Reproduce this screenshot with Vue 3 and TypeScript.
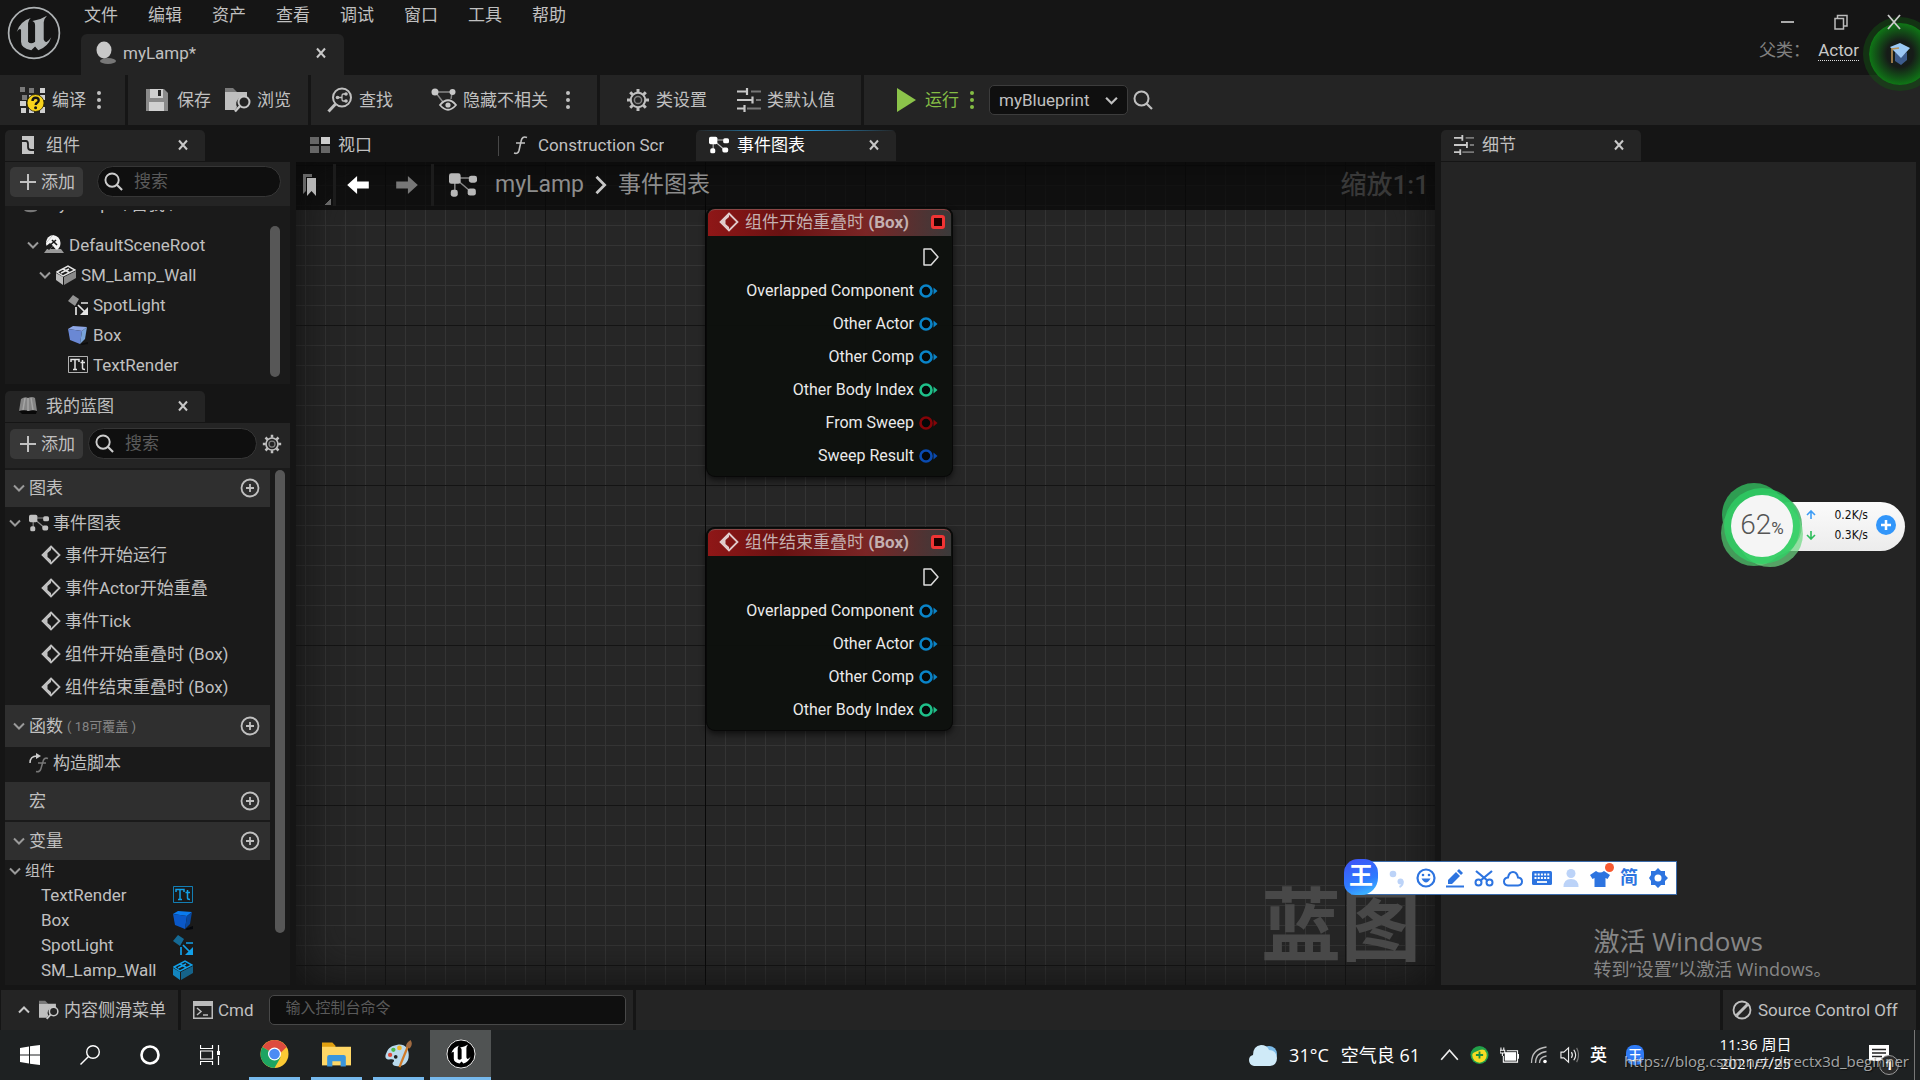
<script setup lang="ts">
import { ref } from 'vue'

interface Pin { label: string; color: string }
interface GraphNode { title: string; left: number; top: number; pins: Pin[] }
interface TreeRow { name: string; icon: string; depth: number; open: boolean }

const menus = ['文件', '编辑', '资产', '查看', '调试', '窗口', '工具', '帮助']

const tree: TreeRow[] = [
  { name: 'DefaultSceneRoot', icon: 'scene', depth: 0, open: true },
  { name: 'SM_Lamp_Wall', icon: 'mesh', depth: 1, open: true },
  { name: 'SpotLight', icon: 'spot', depth: 2, open: false },
  { name: 'Box', icon: 'box', depth: 2, open: false },
  { name: 'TextRender', icon: 'text', depth: 2, open: false },
]

const events = ['事件开始运行', '事件Actor开始重叠', '事件Tick', '组件开始重叠时 (Box)', '组件结束重叠时 (Box)']

const variables = [
  { name: 'TextRender', icon: 'text' },
  { name: 'Box', icon: 'boxblue' },
  { name: 'SpotLight', icon: 'spot' },
  { name: 'SM_Lamp_Wall', icon: 'mesh' },
]

const basePins: Pin[] = [
  { label: 'Overlapped Component', color: '#0a84c8' },
  { label: 'Other Actor', color: '#0a84c8' },
  { label: 'Other Comp', color: '#0a84c8' },
  { label: 'Other Body Index', color: '#1fc08a' },
]

const nodes: GraphNode[] = [
  {
    title: '组件开始重叠时',
    left: 410,
    top: 45,
    pins: [...basePins, { label: 'From Sweep', color: '#850408' }, { label: 'Sweep Result', color: '#0a4bb0' }],
  },
  { title: '组件结束重叠时', left: 410, top: 365, pins: basePins },
]

const imeTools = ['punct', 'smile', 'pen', 'scissors', 'cloud', 'keyboard', 'user', 'shirt', 'jian', 'cog']
const debugTarget = ref('myBlueprint')
const consoleInput = ref('')
const componentFilter = ref('')
const blueprintFilter = ref('')
</script>

<template>
  <div class="editor">
    <svg class="sprite" aria-hidden="true">
      <symbol id="i-close" viewBox="0 0 12 12"><path d="M2 1.5 10 10.5M10 1.5 2 10.5" stroke="currentColor" stroke-width="2" fill="none" /></symbol>
      <symbol id="i-down" viewBox="0 0 12 12"><path d="M1 3.5 6 8.5 11 3.5" stroke="currentColor" stroke-width="2" fill="none" /></symbol>
      <symbol id="i-dots" viewBox="0 0 6 20"><g fill="currentColor"><circle cx="3" cy="3" r="2" /><circle cx="3" cy="10" r="2" /><circle cx="3" cy="17" r="2" /></g></symbol>
      <symbol id="i-search" viewBox="0 0 20 20"><circle cx="8.500" cy="8.500" r="7" fill="none" stroke="currentColor" stroke-width="2" /><path d="m13.500 13.500 5.500 5.500" stroke="currentColor" stroke-width="2.200" /></symbol>
      <symbol id="i-plus" viewBox="0 0 16 16"><path d="M8 0v16M0 8h16" stroke="currentColor" stroke-width="2" /></symbol>
      <symbol id="i-addring" viewBox="0 0 20 20"><circle cx="10" cy="10" r="8.500" fill="none" stroke="currentColor" stroke-width="1.800" /><path d="M10 6v8M6 10h8" stroke="currentColor" stroke-width="1.800" /></symbol>
      <symbol id="i-gear" viewBox="0 0 24 24">
        <g fill="none" stroke="currentColor"><circle cx="12" cy="12" r="7.200" stroke-width="2" /><circle cx="12" cy="12" r="3.600" stroke-width="1.500" opacity=".6" />
          <path stroke-width="3" d="M12 4.500V1M12 19.500V23M4.500 12H1M19.500 12H23M6.700 6.700 4.200 4.200M17.300 17.300l2.500 2.500M17.300 6.700l2.500-2.500M6.700 17.300l-2.500 2.500" /></g>
      </symbol>
      <symbol id="i-compile" viewBox="0 0 26 26">
        <g fill="#7a7a7a"><path d="M0 0h5v5H0zM9 1h5v5H9zM2 8h5v5H2z" /></g>
        <g fill="#d0d0d0"><path d="M20 1h5v5h-5zM0 14h6v5H0zM1 21h5v5H1zM9 8h5v5H9zM20 8h5v5h-5zM20 20h5v6h-5zM9 22h5v4H9z" /></g>
        <circle cx="15.500" cy="16" r="8.500" fill="#f8d31c" stroke="#2a2400" stroke-width=".8" />
        <path d="M12.500 14q0-3.300 3.200-3.300 3 0 3 2.600 0 1.700-1.700 2.600-1.300.7-1.300 2" fill="none" stroke="#151515" stroke-width="2.400" /><circle cx="15.600" cy="20.800" r="1.500" fill="#151515" />
      </symbol>
      <symbol id="i-save" viewBox="0 0 24 24"><path d="M1 1h18l4 4v18H1z" fill="#8a8a8a" /><path d="M5 1h13v9H5z" fill="#d0d0d0" /><path d="M13 2h3v6h-3z" fill="#242424" /><path d="M4 14h15v9H4z" fill="#d0d0d0" /></symbol>
      <symbol id="i-browse" viewBox="0 0 26 26"><path d="M0 5V1h8l4 4z" fill="#7a7a7a" /><path d="M0 5h22v6a7 7 0 0 0-10 9l-2 3H0z" fill="#bfbfbf" /><circle cx="19" cy="15" r="5.500" fill="none" stroke="#c8c8c8" stroke-width="2" /><path d="m15 19-5 5.500" stroke="#c8c8c8" stroke-width="2.400" /></symbol>
      <symbol id="i-find" viewBox="0 0 26 26"><circle cx="15" cy="10.500" r="9" fill="none" stroke="currentColor" stroke-width="2" /><path d="m8.500 17-7 7.500" stroke="currentColor" stroke-width="3" /><path d="M19 7h-3q-1 0-1 2v3q0 2 1 2h3M10 10.500h5" stroke="currentColor" stroke-width="1.300" fill="none" /><g fill="currentColor"><circle cx="10.500" cy="10.500" r="1.800" /><circle cx="19" cy="7" r="1.800" /><circle cx="19" cy="14" r="1.800" /></g></symbol>
      <symbol id="i-hide" viewBox="0 0 26 24"><path d="M4 4h18M5 5l7 9M21 5l-1 6" stroke="#888" stroke-width="1.500" fill="none" /><g fill="#c8c8c8"><circle cx="4" cy="4" r="3.500" /><circle cx="21.500" cy="4" r="3" /></g><path d="M9 17q8-9.500 16 0-8 9.500-16 0z" fill="#242424" stroke="#c8c8c8" stroke-width="1.800" /><circle cx="17" cy="17" r="2.600" fill="#c8c8c8" /></symbol>
      <symbol id="i-sliders" viewBox="0 0 24 24"><path d="M14 3.500h10M19 12h5M10 20.500h14" stroke="#777" stroke-width="2.200" /><path d="M0 3.500h10M0 12h16M0 20.500h8" stroke="#c8c8c8" stroke-width="2.200" /><path d="M10 0v7M15.500 8.500v7M7.500 17v7" stroke="#c8c8c8" stroke-width="2.200" /></symbol>
      <symbol id="i-graph" viewBox="0 0 24 20"><path d="M5 4h15M5 4v12M5 4l14 12" stroke="currentColor" stroke-width="1.300" opacity=".7" /><g fill="currentColor"><rect width="10" height="9" rx="2" /><rect x="17" y="2" width="7" height="6" rx="2" /><rect x="1.500" y="14" width="6" height="6" rx="2" /><rect x="16" y="13" width="7" height="6" rx="2" /></g></symbol>
      <symbol id="i-comp" viewBox="0 0 14 20"><path d="M1 1h12v18H1z" fill="#c4c4c4" /><path d="M1 6h4q2 0 2 3v3q0 3 3 3h3" fill="none" stroke="#222" stroke-width="1.800" /></symbol>
      <symbol id="i-book" viewBox="0 0 20 20"><path d="m1 15 3 3 14 0 1-3z" fill="#080808" /><path d="M3 3q4-3 7-1 4-2 7 0l2 13q-4-2-8 0-5-2-10 0z" fill="#858585" /><path d="M7 2 5 14M10 2v13M13 2l2 12" stroke="#a5a5a5" stroke-width="1.500" /></symbol>
      <symbol id="i-view" viewBox="0 0 20 18"><path d="M0 1h9v7H0zM0 10h9v7H0zM11 10h9v7h-9z" fill="#666" /><path d="M11 1h9v7h-9z" fill="#ccc" /></symbol>
      <symbol id="i-func" viewBox="0 0 14 20"><path d="M14 2.500q-5-2-6 4l-2 9q-1 4-5 2.500M3 8h9" fill="none" stroke="currentColor" stroke-width="1.600" /></symbol>
      <symbol id="i-construct" viewBox="0 0 20 20"><path d="M1 10Q1 3 8 3" fill="none" stroke="#ccc" stroke-width="1.500" /><path d="m7 0 5 3-5 3z" fill="#ccc" /><path d="M19 5.500q-4-1.500-5 3l-2 7q-1 4-5 3M9 10h8" fill="none" stroke="#777" stroke-width="1.500" /></symbol>
      <symbol id="i-sphere" viewBox="0 0 20 24"><ellipse cx="12" cy="20" rx="8" ry="3" fill="#777" /><ellipse cx="8" cy="9" rx="7.500" ry="8.500" fill="#c8c8c8" /></symbol>
      <symbol id="i-scene" viewBox="0 0 20 20"><path d="M3 14h14l3 4H0z" fill="#999" /><path d="M2 7Q3 1 9 0L2 8z" fill="#f4f4f4" /><path d="M2 8 9 0q7 1 7.500 8 0 4-3 6.500H12L9 11l-3 3Q2 12 2 8z" fill="#f4f4f4" /><path d="m1 12 5-4 3 3-4 4z" fill="#1a1a1a" /><path d="m4 12 8-7M8 5l5 5" stroke="#1a1a1a" stroke-width="1.600" /></symbol>
      <symbol id="i-mesh" viewBox="0 0 20 20"><path d="m0 8 7 4v8l-7-5z" fill="currentColor" opacity=".8" /><path d="m8 12 12-6v7L8 20z" fill="currentColor" opacity=".55" /><path d="M1 7 12 1l7 4-12 6zM7 4l7 4M13 4 5 8" fill="#1a1a1a" stroke="currentColor" stroke-width="1.500" /></symbol>
      <symbol id="i-spot" viewBox="0 0 20 20"><path d="m5 0 6 4-4 7-7-5z" fill="currentColor" opacity=".6" /><path d="M8 12v8M13 8h7M10 10l7 7" stroke="currentColor" stroke-width="1.700" /><path d="M20 12v8h-8z" fill="currentColor" /></symbol>
      <symbol id="i-box" viewBox="0 0 20 20"><path d="m12 19 8-2v2l-6 1z" fill="#0c0c0c" /><path d="m0 4 5-3 14 1-5 4z" fill="#8fa8e8" /><path d="m0 4 14 2-2 13L2 15z" fill="#6a88d4" /><path d="m14 6 5-4-2 12-5 5z" fill="#79a4da" /></symbol>
      <symbol id="i-boxblue" viewBox="0 0 20 20"><path d="m12 19 8-3v3l-6 1z" fill="#05070c" /><path d="m0 4 5-3 14 1-5 4z" fill="#0a7cf0" /><path d="m0 4 14 2-2 13L2 15z" fill="#0a58c8" /><path d="m14 6 5-4-2 12-5 5z" fill="#0848a0" /></symbol>
      <symbol id="i-text" viewBox="0 0 20 18"><path d="M.5.500h19v16H.5z" fill="none" stroke="currentColor" opacity=".75" /><path d="M3 6V3.500h8V6M7 3.500v10M5 13.500h4M14.500 4v8q0 1.500 2.500 1.500M12.500 6.500H17" fill="none" stroke="currentColor" stroke-width="1.500" /></symbol>
      <symbol id="i-event" viewBox="0 0 20 20"><path d="M10 1.500 18.500 10 10 18.500 1.500 10z" fill="none" stroke="currentColor" stroke-width="1.800" /><path d="M10 1v4L6.500 8v4l3.500 3v4L1 10z" fill="currentColor" /></symbol>
      <symbol id="i-bookmark" viewBox="0 0 20 26"><path d="M2 2h9v3H5v14l-3 3z" fill="#666" /><path d="M6 6h9v18l-4.500-5L6 24z" fill="#b5b5b5" /></symbol>
      <symbol id="i-arrow" viewBox="0 0 24 20"><path d="M0 10 11 0v6h13v8H11v6z" fill="currentColor" /></symbol>
      <symbol id="i-crumb" viewBox="0 0 14 22"><path d="m2 2 9 9-9 9" fill="none" stroke="#c8c8c8" stroke-width="3" /></symbol>
      <symbol id="i-cmd" viewBox="0 0 20 18"><path d="M0 0h20v18H0z" fill="#bbb" /><path d="M1.500 5h17v11.500h-17z" fill="#242424" /><path d="m4 7 4 3.500L4 14M10 14h5" stroke="#bbb" stroke-width="1.500" fill="none" /></symbol>
      <symbol id="i-off" viewBox="0 0 20 20"><circle cx="10" cy="10" r="8.500" fill="none" stroke="currentColor" stroke-width="1.800" /><path d="M4.500 15.500 15.500 4.500" stroke="currentColor" stroke-width="3" /></symbol>
      <symbol id="i-unreal" viewBox="0 0 50 50">
        <circle cx="25" cy="25" r="24" fill="currentColor" />
        <circle cx="25" cy="25" r="23.500" fill="none" stroke="var(--mark)" stroke-width="1.600" />
        <path d="M9 24Q12 14 22 11q-2.500 2-2.500 5v17q2.500 3 6.500 0V18q0-3-2.500-4 7-1 13.500-5-3 3-3 6v16q1 3 3 2 2-1 4-4-3 9-12 12l-3-3.500-3.500 3.500q-9.500-2-9.500-8V22q-1.500-2-4 2z" fill="var(--mark)" />
      </symbol>
      <symbol id="i-punct" viewBox="0 0 20 20"><g fill="#bcd3f8"><circle cx="6" cy="6" r="3.300" /><circle cx="13.500" cy="13.500" r="3" /></g><path d="M15.500 13q1 4-3 6" stroke="#bcd3f8" stroke-width="2" fill="none" /></symbol>
      <symbol id="i-smile" viewBox="0 0 20 20"><circle cx="10" cy="10" r="8.500" fill="none" stroke="currentColor" stroke-width="2.200" /><path d="M5.500 10.500q4.500 8 9 0z" fill="currentColor" /><circle cx="7" cy="7" r="1.300" fill="currentColor" /><circle cx="13" cy="7" r="1.300" fill="currentColor" /></symbol>
      <symbol id="i-pen" viewBox="0 0 20 20"><path d="M1 18.500h18" stroke="currentColor" stroke-width="2" /><path d="M3 16V12L11 4l4 4-8 8zM12 3l2-2 4 4-2 2z" fill="currentColor" /></symbol>
      <symbol id="i-scissors" viewBox="0 0 20 20"><path d="m2 3 12 10M18 3 6 13" stroke="currentColor" stroke-width="2.200" /><g fill="none" stroke="currentColor" stroke-width="2"><circle cx="4.500" cy="14.500" r="3" /><circle cx="15.500" cy="14.500" r="3" /></g></symbol>
      <symbol id="i-cloud" viewBox="0 0 20 20"><path d="M5 17.500q-4-.5-4-4 0-3.500 4-4 1-5.500 5-5.500t5 5.500q4 .5 4 4 0 3.500-4 4z" fill="none" stroke="currentColor" stroke-width="2" /></symbol>
      <symbol id="i-keyboard" viewBox="0 0 20 20"><rect y="3" width="20" height="14" rx="1.500" fill="currentColor" /><path d="M2.500 6.500h15M2.500 10h15" stroke="#fff" stroke-width="1.800" stroke-dasharray="2 1.200" /><path d="M5 14h10" stroke="#fff" stroke-width="1.800" /></symbol>
      <symbol id="i-user" viewBox="0 0 20 20"><g fill="#bcd3f8"><circle cx="10" cy="5.500" r="4.500" /><path d="M2.500 19q0-8 7.500-8t7.500 8z" /></g></symbol>
      <symbol id="i-shirt" viewBox="0 0 20 20"><path d="M6 3q4 3 8 0l6 4-2.500 4-2-1v9h-11v-9l-2 1L0 7z" fill="currentColor" /></symbol>
      <symbol id="i-cog" viewBox="0 0 20 20"><path d="m10 0 3 3h4v4l3 3-3 3v4h-4l-3 3-3-3H3v-4l-2-3 2-3V3h4z" fill="currentColor" /><circle cx="10" cy="10" r="3.500" fill="#fff" /></symbol>
      <symbol id="i-win" viewBox="0 0 20 20"><path d="M0 3l9-1.500v8H0zM10 1.300 20 0v9.500H10zM0 10.500h9v8L0 17zM10 10.500h10V20l-10-1.300z" fill="#fff" /></symbol>
      <symbol id="i-wsearch" viewBox="0 0 20 20"><circle cx="13" cy="7" r="6.300" fill="none" stroke="#fff" stroke-width="1.400" /><path d="M8.500 11.500.5 19.500" stroke="#fff" stroke-width="1.400" /></symbol>
      <symbol id="i-cortana" viewBox="0 0 20 20"><circle cx="10" cy="10" r="8.500" fill="none" stroke="#fff" stroke-width="2.600" /></symbol>
      <symbol id="i-taskview" viewBox="0 0 20 20"><path d="M.5 0v3.500h12V0M.5 20v-3.500h12V20M.5 6h12v8H.5zM18.500 0v6M18.500 11v9" fill="none" stroke="#fff" stroke-width="1.200" /><path d="M17 6h3v4h-3z" fill="#fff" /></symbol>
      <symbol id="i-chrome" viewBox="0 0 28 28"><circle cx="14" cy="14" r="14" fill="#fcc934" /><path d="M14 14 1.900 7A14 14 0 0 1 26.100 7z" fill="#dd4b3e" /><path d="M14 14 1.900 7A14 14 0 0 0 14 28l6-10.500z" fill="#1da462" /><path d="M14 7h12.100L20 13z" fill="#dd4b3e" /><circle cx="14" cy="14" r="6.500" fill="#fff" /><circle cx="14" cy="14" r="5.300" fill="#4b8bf4" /></symbol>
      <symbol id="i-folder" viewBox="0 0 28 24"><path d="M0 1h10l3 3v6H0z" fill="#e0a010" /><path d="M0 5h28v18H0z" fill="#ffd766" /><path d="M5 24V15q0-2 2-2h14q2 0 2 2v9h-5v-5h-8v5z" fill="#3a96dd" /></symbol>
      <symbol id="i-paint" viewBox="0 0 30 30"><path d="M14 5c8-1 12 4 12 11 0 8-5 12-12 12-5 0-7-3-4-5 1-2-1-3-5-2-4 0-5-3-3-7C4 8 8 6 14 5z" fill="#b9d9ec" /><circle cx="6" cy="16" r="2.300" fill="#e04a3a" /><circle cx="9.500" cy="10.500" r="2.300" fill="#4fb848" /><circle cx="16" cy="8.500" r="2.500" fill="#f0b428" /><circle cx="12" cy="18" r="2" fill="#222" /><path d="M25 7 16 29" stroke="#d07a28" stroke-width="2.400" /><path d="M23 7q0-4 5-7 3 5-1 9z" fill="#a06a40" /></symbol>
      <symbol id="i-weather" viewBox="0 0 28 24"><circle cx="20" cy="11" r="8" fill="#7dbbe8" /><path d="M5 23q-5-1-5-6 0-4 4-5Q4 3 12 2q6 0 8 5 7 0 8 8 0 7-7 8z" fill="#cfeaf8" /></symbol>
      <symbol id="i-up" viewBox="0 0 16 12"><path d="m1 10 7-8 7 8" fill="none" stroke="#eee" stroke-width="1.400" /></symbol>
      <symbol id="i-360" viewBox="0 0 20 20"><circle cx="10" cy="10" r="10" fill="#22a04a" /><circle cx="10" cy="10.500" r="8" fill="#f6dc24" /><path d="M0 10Q2 1 10 1q6 0 7 3-8-1-17 6z" fill="#22a04a" /><path d="M10 6v8M6 10h8" stroke="#1a9040" stroke-width="2" /></symbol>
      <symbol id="i-battery" viewBox="0 0 20 16"><path d="M5 5h12v9H5z" fill="#fff" /><path d="M3.500 9v6.500h15V3.500H7M19.500 7v5M1 0v3M4 0v3M0 3h5v3H0zM2.500 6v3" fill="none" stroke="#fff" stroke-width="1.100" /></symbol>
      <symbol id="i-wifi" viewBox="0 0 18 18"><path d="M1 17Q1 3 16 1M5 17Q5 7 16 5.500M9 17q0-6 7-7" fill="none" stroke="#bbb" stroke-width="1.300" /><circle cx="14.500" cy="15.500" r="1.800" fill="#fff" /></symbol>
      <symbol id="i-sound" viewBox="0 0 20 18"><path d="M1 6h3l5-4.500v15L4 12H1z" fill="none" stroke="#eee" stroke-width="1.200" /><path d="M12 6q2 3 0 6M14.500 3.500q4 5.500 0 11" fill="none" stroke="#eee" stroke-width="1.200" /><path d="M17.500 1.500q4 7.500 0 15" fill="none" stroke="#777" stroke-width="1.200" /></symbol>
      <symbol id="i-notice" viewBox="0 0 20 20"><path d="M0 0h20v16h-5l-4 4v-4H0z" fill="#fff" /><path d="M3 4.500h14M3 8h14M3 11.500h10" stroke="#222" stroke-width="1.300" /></symbol>
      <symbol id="i-hat" viewBox="0 0 20 22"><path d="m5 9 6 5 6-5v8l-6 5-6-4z" fill="#3d5c8c" /><path d="m0 4 10-4 10 5-9 10z" fill="#9cc8f4" /><path d="M9 5 2 6v14" fill="none" stroke="#b89058" stroke-width="1.600" /></symbol>
    </svg>

    <header class="titlebar">
      <svg class="logo"><use href="#i-unreal" /></svg>
      <div class="title-main">
        <nav class="menus"><button v-for="m in menus" :key="m" type="button">{{ m }}</button></nav>
        <div class="asset-tab">
          <svg class="s20 tall"><use href="#i-sphere" /></svg>
          <span>myLamp*</span>
          <button class="x" type="button" aria-label="关闭"><svg><use href="#i-close" /></svg></button>
        </div>
      </div>
      <div class="title-side">
        <div class="winbtns">
          <button type="button" aria-label="最小化"><svg viewBox="0 0 14 16"><path d="M0 8h13" stroke="#aaa" stroke-width="2" /></svg></button>
          <button type="button" aria-label="还原"><svg viewBox="0 0 14 16"><path d="M1 4.500h8.500V15H1zM3.500 4V1.500H13V12H10" fill="none" stroke="#bbb" stroke-width="1.500" /></svg></button>
          <button type="button" aria-label="关闭窗口"><svg viewBox="0 0 14 16"><path d="m1 1 12 14M13 1 1 15" stroke="#ccc" stroke-width="1.800" /></svg></button>
        </div>
        <p class="parent">父类： <a href="#actor">Actor</a></p>
      </div>
    </header>

    <div class="toolbar">
      <div class="group g-compile">
        <button type="button"><svg class="s26"><use href="#i-compile" /></svg>编译</button>
        <button type="button" class="dots" aria-label="编译选项"><svg><use href="#i-dots" /></svg></button>
      </div>
      <div class="group g-save">
        <button type="button"><svg class="s24"><use href="#i-save" /></svg>保存</button>
        <button type="button"><svg class="s26"><use href="#i-browse" /></svg>浏览</button>
      </div>
      <div class="group g-find">
        <button type="button"><svg class="s26"><use href="#i-find" /></svg>查找</button>
        <button type="button"><svg class="s26"><use href="#i-hide" /></svg>隐藏不相关</button>
        <button type="button" class="dots" aria-label="隐藏选项"><svg><use href="#i-dots" /></svg></button>
      </div>
      <div class="group g-class">
        <button type="button"><svg class="s24"><use href="#i-gear" /></svg>类设置</button>
        <button type="button"><svg class="s24"><use href="#i-sliders" /></svg>类默认值</button>
      </div>
      <div class="group g-run">
        <button type="button" class="run"><svg class="s24" viewBox="0 0 24 24"><path d="M3 0v24l19-12z" fill="#8bc34a" /></svg>运行</button>
        <button type="button" class="dots run" aria-label="运行选项"><svg><use href="#i-dots" /></svg></button>
        <label class="picker">
          <select v-model="debugTarget" aria-label="调试对象"><option>myBlueprint</option></select>
          <svg><use href="#i-down" /></svg>
        </label>
        <button type="button" class="lens" aria-label="查找对象"><svg class="s20"><use href="#i-search" /></svg></button>
      </div>
    </div>

    <main class="workspace">
      <aside class="left">
        <div class="tab"><svg class="s20"><use href="#i-comp" /></svg>组件<button class="x" type="button" aria-label="关闭"><svg><use href="#i-close" /></svg></button></div>
        <section class="panel components">
          <div class="panel-head">
            <button type="button" class="add"><svg><use href="#i-plus" /></svg>添加</button>
            <label class="search wide"><svg><use href="#i-search" /></svg><input v-model="componentFilter" type="text" placeholder="搜索" aria-label="搜索组件"></label>
          </div>
          <div class="tree">
            <ul>
              <li class="self"><svg class="s20"><use href="#i-sphere" /></svg>myLamp（ 自我 ）</li>
              <li v-for="row in tree" :key="row.name" :class="'depth' + row.depth">
                <svg v-if="row.open" class="chev"><use href="#i-down" /></svg>
                <svg class="s20 bright"><use :href="'#i-' + row.icon" /></svg>{{ row.name }}
              </li>
            </ul>
            <div class="thumb"></div>
          </div>
        </section>

        <div class="tab second"><svg class="s20"><use href="#i-book" /></svg>我的蓝图<button class="x" type="button" aria-label="关闭"><svg><use href="#i-close" /></svg></button></div>
        <section class="panel blueprint">
          <div class="panel-head tall-head">
            <button type="button" class="add"><svg><use href="#i-plus" /></svg>添加</button>
            <label class="search"><svg><use href="#i-search" /></svg><input v-model="blueprintFilter" type="text" placeholder="搜索" aria-label="搜索蓝图"></label>
            <button type="button" class="opts" aria-label="设置"><svg class="s20"><use href="#i-gear" /></svg></button>
          </div>
          <div class="outline">
            <div class="outline-list">
              <h3><svg class="chev"><use href="#i-down" /></svg>图表<button type="button" aria-label="添加图表"><svg class="s20"><use href="#i-addring" /></svg></button></h3>
              <p class="graph-row"><svg class="chev"><use href="#i-down" /></svg><svg class="s20"><use href="#i-graph" /></svg>事件图表</p>
              <ul class="events">
                <li v-for="e in events" :key="e"><svg class="s20"><use href="#i-event" /></svg>{{ e }}</li>
              </ul>
              <h3 class="roomy"><svg class="chev"><use href="#i-down" /></svg>函数<small>( 18可覆盖 )</small><button type="button" aria-label="添加函数"><svg class="s20"><use href="#i-addring" /></svg></button></h3>
              <p class="func-row"><svg class="s20"><use href="#i-construct" /></svg>构造脚本</p>
              <h3 class="plain">宏<button type="button" aria-label="添加宏"><svg class="s20"><use href="#i-addring" /></svg></button></h3>
              <h3 class="vars-head"><svg class="chev"><use href="#i-down" /></svg>变量<button type="button" aria-label="添加变量"><svg class="s20"><use href="#i-addring" /></svg></button></h3>
              <p class="category"><svg class="chev"><use href="#i-down" /></svg>组件</p>
              <ul class="vars">
                <li v-for="v in variables" :key="v.name"><span>{{ v.name }}</span><svg class="s20"><use :href="'#i-' + v.icon" /></svg></li>
              </ul>
            </div>
            <div class="thumb"></div>
          </div>
        </section>
      </aside>

      <section class="center">
        <div class="tabs">
          <button type="button" class="doc"><svg class="s20"><use href="#i-view" /></svg><span>视口</span></button>
          <button type="button" class="doc ruled"><svg class="s20"><use href="#i-func" /></svg><span>Construction Script</span></button>
          <div class="tab active"><svg class="s20"><use href="#i-graph" /></svg>事件图表<button class="x" type="button" aria-label="关闭"><svg><use href="#i-close" /></svg></button></div>
        </div>
        <div class="canvas">
          <div class="crumbs">
            <button type="button" class="mark" aria-label="书签"><svg><use href="#i-bookmark" /></svg></button>
            <div class="history">
              <button type="button" class="back" aria-label="后退"><svg><use href="#i-arrow" /></svg></button>
              <button type="button" class="fwd" aria-label="前进"><svg><use href="#i-arrow" /></svg></button>
            </div>
            <svg class="crumb-icon"><use href="#i-graph" /></svg>
            <span>myLamp</span>
            <svg class="crumb-sep"><use href="#i-crumb" /></svg>
            <span>事件图表</span>
            <span class="zoom">缩放1:1</span>
          </div>
          <article v-for="n in nodes" :key="n.title" class="node" :style="{ left: n.left + 'px', top: n.top + 'px' }">
            <header><svg class="s20"><use href="#i-event" /></svg><span>{{ n.title }} <b>(Box)</b></span><i></i></header>
            <div class="exec"><svg viewBox="0 0 16 18"><path d="M1 1h7l7 8-7 8H1z" fill="none" stroke="#ddd" stroke-width="1.500" stroke-linejoin="round" /></svg></div>
            <ul>
              <li v-for="p in n.pins" :key="p.label">{{ p.label }}
                <svg viewBox="0 0 20 14" :style="{ color: p.color }"><circle cx="7" cy="7" r="5.500" fill="#050808" stroke="currentColor" stroke-width="2.600" /><path d="m14.500 3.500 4 3.500-4 3.500z" fill="currentColor" /></svg>
              </li>
            </ul>
          </article>
          <div class="stamp">蓝图</div>
        </div>
      </section>

      <aside class="details">
        <div class="tab"><svg class="s20"><use href="#i-sliders" /></svg>细节<button class="x" type="button" aria-label="关闭"><svg><use href="#i-close" /></svg></button></div>
        <div class="panel empty"></div>
      </aside>
    </main>

    <footer class="status">
      <button type="button" class="cell drawer"><svg class="chev flip"><use href="#i-down" /></svg><svg class="s20"><use href="#i-browse" /></svg>内容侧滑菜单</button>
      <div class="cell console">
        <svg class="s20"><use href="#i-cmd" /></svg><label for="console">Cmd</label>
        <input id="console" v-model="consoleInput" type="text" placeholder="输入控制台命令">
      </div>
      <div class="cell fill"></div>
      <button type="button" class="cell source"><svg class="s20"><use href="#i-off" /></svg>Source Control Off</button>
    </footer>

    <div class="taskbar">
      <button type="button" class="sys" aria-label="开始"><svg class="s20"><use href="#i-win" /></svg></button>
      <button type="button" class="sys" aria-label="搜索"><svg class="s20"><use href="#i-wsearch" /></svg></button>
      <button type="button" class="sys" aria-label="Cortana"><svg class="s20"><use href="#i-cortana" /></svg></button>
      <button type="button" class="sys" aria-label="任务视图"><svg class="s20"><use href="#i-taskview" /></svg></button>
      <div class="apps">
        <button type="button" aria-label="Chrome"><svg><use href="#i-chrome" /></svg></button>
        <button type="button" aria-label="文件资源管理器"><svg><use href="#i-folder" /></svg></button>
        <button type="button" aria-label="画图"><svg><use href="#i-paint" /></svg></button>
        <button type="button" class="current" aria-label="Unreal"><svg><use href="#i-unreal" /></svg></button>
      </div>
      <div class="weather"><svg><use href="#i-weather" /></svg><span>31°C</span><span>空气良 61</span></div>
      <div class="tray">
        <svg><use href="#i-up" /></svg><svg><use href="#i-360" /></svg><svg><use href="#i-battery" /></svg><svg><use href="#i-wifi" /></svg><svg><use href="#i-sound" /></svg>
        <b>英</b><b class="wang">王</b>
      </div>
      <time class="clock"><span>11:36 周日</span><span>2021/7/25</span></time>
      <button type="button" class="notice" aria-label="通知"><svg class="s20"><use href="#i-notice" /></svg><i>1</i></button>
    </div>

    <div class="activate"><strong>激活 Windows</strong><span>转到“设置”以激活 Windows。</span></div>

    <div class="orb"><svg><use href="#i-hat" /></svg></div>

    <div class="meter">
      <div class="rates">
        <p><svg viewBox="0 0 10 10"><path d="M5 9V1M1 5l4-4 4 4" stroke="#3d9cf5" stroke-width="1.600" fill="none" /></svg>0.2K/s</p>
        <p><svg viewBox="0 0 10 10"><path d="M5 1v8M1 5l4 4 4-4" stroke="#2dbd5b" stroke-width="1.600" fill="none" /></svg>0.3K/s</p>
      </div>
      <button type="button" aria-label="加速"><svg viewBox="0 0 20 20"><circle cx="10" cy="10" r="10" fill="#3296fa" /><path d="M10 5v10M5 10h10" stroke="#fff" stroke-width="2.500" /></svg></button>
      <div class="dial">
        <svg viewBox="0 0 84 88">
          <circle cx="34" cy="34" r="32" fill="#2f9d52" />
          <circle cx="50" cy="44" r="32" fill="#3fae62" opacity=".85" />
          <circle cx="34" cy="52" r="33" fill="#48a861" opacity=".9" />
          <circle cx="50" cy="53" r="33" fill="#6cd882" opacity=".7" />
          <circle cx="42" cy="45" r="38" fill="#2fd266" opacity=".75" />
          <circle cx="42" cy="45" r="31" fill="#f5f5f5" />
        </svg>
        <p>62<small>%</small></p>
      </div>
    </div>

    <div class="ime">
      <div class="bubble"><b>王</b></div>
      <button v-for="t in imeTools" :key="t" type="button" :aria-label="t" :class="t">
        <template v-if="t === 'jian'">简</template>
        <svg v-else><use :href="'#i-' + t" /></svg>
      </button>
    </div>

    <a class="source-link" href="#source">https://blog.csdn.net/directx3d_beginner</a>
  </div>
</template>

<style>
body { background: #151515; }
</style>

<style scoped>
.editor { --mark: #aeb2b4; position: relative; display: flex; flex-direction: column; min-height: 100vh; overflow: hidden; background: #151515; color: #c0c0c0; font: 17px/24px Roboto, "Noto Sans CJK SC", sans-serif; }
.editor *, .editor *::before { box-sizing: border-box; }
.sprite { position: absolute; width: 0; height: 0; }
button { display: flex; align-items: center; padding: 0; border: 0; background: none; color: inherit; font: inherit; white-space: nowrap; }
svg { flex: none; }
ul, p, h3 { margin: 0; padding: 0; list-style: none; font: inherit; }
input, select { font: inherit; color: #c0c0c0; outline: 0; }
input::placeholder { color: #5a5a5a; opacity: 1; }
.s20 { width: 20px; height: 20px; }
.s24 { width: 24px; height: 24px; }
.s26 { width: 26px; height: 26px; }
.tall { height: 24px; }
.bright { color: #e4e4e4; }
.chev { width: 12px; height: 12px; color: #9a9a9a; }
.flip { color: #c8c8c8; transform: rotate(180deg); }
.x { margin-left: auto; color: #c8c8c8; }
.x svg { width: 12px; height: 12px; }

.titlebar { display: flex; height: 75px; }
.logo { width: 54px; height: 54px; margin: 6px 0 0 7px; color: #151515; }
.title-main { display: flex; flex-direction: column; justify-content: space-between; flex: 1; padding-left: 20px; }
.menus { display: flex; gap: 30px; padding: 3px 0 0 3px; }
.asset-tab { display: flex; align-items: center; gap: 7px; width: 263px; height: 41px; padding: 0 17px 3px 15px; border-radius: 6px 6px 0 0; background: #242424; }
.title-side { display: flex; flex-direction: column; gap: 8px; padding-top: 14px; }
.winbtns { position: relative; z-index: 2; display: flex; gap: 39px; padding: 0 19px 0 22px; }
.winbtns svg { width: 14px; height: 16px; }
.parent { padding-right: 57px; color: #808080; }
.parent a { margin-left: 4px; color: #c8c8c8; text-decoration: none; border-bottom: 1px dotted #ddd; }

.toolbar { display: flex; gap: 3px; height: 50px; }
.group { display: flex; align-items: center; background: #242424; }
.group button { gap: 6px; }
.dots svg { width: 6px; height: 20px; }
.g-compile { width: 125px; padding-left: 20px; gap: 10px; }
.g-save { width: 180px; padding-left: 17px; gap: 14px; }
.g-save button:first-child { gap: 8px; }
.g-find { width: 286px; padding-left: 16px; }
.g-find button:nth-child(2) { margin-left: 38px; }
.g-find .dots { margin-left: 17px; }
.g-class { width: 261px; padding-left: 26px; gap: 30px; }
.g-run { flex: 1; padding-left: 30px; gap: 10px; }
.run { color: #84bd44; }
.picker { position: relative; width: 139px; margin-left: 4px; }
.g-run .run { gap: 7px; }
.picker select { width: 100%; height: 30px; padding: 0 9px; border: 1px solid #3c3c3c; border-radius: 5px; background: #0f0f0f; appearance: none; }
.picker svg { position: absolute; right: 10px; top: 9px; width: 13px; height: 13px; }
.lens { margin-left: -5px; }

.workspace { display: flex; flex: 1; gap: 6px; padding: 5px 4px 5px 5px; }
.left { display: flex; flex-direction: column; flex: none; width: 285px; }
.tab { display: flex; align-items: center; gap: 8px; width: 200px; height: 31px; margin-bottom: 1px; padding: 0 16px 2px 13px; border-radius: 5px 5px 0 0; background: #242424; }
.tab.second { margin-top: 7px; }
.panel { background: #1a1a1a; }
.panel-head { display: flex; align-items: flex-start; height: 44px; padding: 4px 5px; background: #242424; }
.tall-head { height: 45px; padding: 5px; }
.add { gap: 5px; width: 73px; height: 30px; margin-top: 1px; padding-left: 10px; border-radius: 5px; background: #383838; }
.add svg { width: 16px; height: 16px; }
.search { position: relative; width: 169px; margin-left: 5px; }
.search.wide { width: 184px; margin-left: 14px; }
.search input { width: 100%; height: 31px; padding: 0 10px 2px 36px; border: 1px solid #363636; border-radius: 16px; background: #0f0f0f; }
.search svg { position: absolute; left: 7px; top: 6px; width: 19px; height: 19px; color: #ccc; }
.opts { margin: 6px 0 0 5px; }
.tree { display: flex; justify-content: space-between; height: 178px; padding: 4px 10px 5px 0; }
.tree ul { flex: 1; overflow: hidden; }
.tree li { display: flex; align-items: center; gap: 5px; height: 30px; }
.tree .self { align-items: flex-start; height: 41px; margin-top: -21px; padding-left: 14px; line-height: 30px; }
.tree .self svg { margin-top: 4px; }
.tree .depth0 { padding-left: 22px; }
.tree .depth1 { padding-left: 34px; }
.tree .depth2 { padding-left: 63px; }
.thumb { flex: none; width: 10px; border-radius: 5px; background: #575757; }
.tree .thumb { height: 151px; margin-top: 16px; }

.blueprint { flex: 1; }
.outline { display: flex; gap: 5px; padding-top: 2px; }
.outline-list { width: 265px; padding-bottom: 3px; }
.outline .thumb { height: 463px; }
h3 { display: flex; align-items: center; gap: 4px; height: 37px; padding: 0 10px 1px 8px; background: #2f2f2f; }
h3 button { margin-left: auto; }
h3 small { padding-top: 2px; color: #858585; font-size: 13px; }
h3.roomy { height: 42px; }
h3.plain { height: 38px; padding-left: 24px; }
h3.vars-head { height: 38px; margin-top: 2px; }
.graph-row { display: flex; align-items: center; height: 32px; padding-left: 4px; }
.graph-row .s20 { margin: 0 4px 0 8px; }
.events { padding-bottom: 1px; }
.events li { display: flex; align-items: center; gap: 4px; height: 33px; padding: 0 0 1px 36px; }
.func-row { display: flex; align-items: center; gap: 4px; height: 35px; padding: 0 0 3px 24px; }
.category { display: flex; align-items: center; gap: 4px; height: 22px; padding-left: 4px; font-size: 15px; }
.vars li { display: flex; align-items: center; height: 25px; padding-left: 36px; color: #c0c0c0; }
.vars span { width: 132px; }
.vars svg { color: #12a0e8; }

.center { display: flex; flex-direction: column; flex: 1; min-width: 0; }
.tabs { display: flex; }
.doc { gap: 8px; width: 200px; height: 31px; padding: 0 32px 2px 14px; }
.doc.ruled { padding-left: 16px; gap: 10px; background: linear-gradient(#484848, #484848) 2px 6px / 1px 20px no-repeat; }
.doc.ruled .s20 { width: 16px; }
.doc span { overflow: hidden; }
.tab.active { position: relative; color: #fff; }
.tab.active::before { content: ""; position: absolute; left: 0; top: 0; width: 100%; height: 1px; background: linear-gradient(90deg, transparent, #26a8f0, transparent); }
.canvas { position: relative; flex: 1; overflow: hidden; box-shadow: inset 0 0 50px #101010; background:
  linear-gradient(#080808, #080808) 409px 0 / 1px 100% no-repeat,
  linear-gradient(90deg, #141414 1px, transparent 1px) 89px 3px / 160px 160px,
  linear-gradient(#141414 1px, transparent 1px) 89px 3px / 160px 160px,
  linear-gradient(90deg, #343434 1px, transparent 1px) 9px 3px / 20px 20px,
  linear-gradient(#343434 1px, transparent 1px) 9px 3px / 20px 20px, #262626; }
.crumbs { display: flex; align-items: center; height: 48px; padding: 0 6px 2px 0; background: rgba(6, 6, 6, .68); color: #8c8c8c; font-size: 23px; }
.mark { height: 42px; width: 40px; padding-left: 5px; border-right: 3px solid #1c1c1c; background: linear-gradient(135deg, transparent 50%, #666 50%) 28px 34px / 7px 7px no-repeat; }
.mark svg { width: 20px; height: 26px; }
.history { display: flex; gap: 25px; height: 42px; width: 98px; padding-left: 10px; border-right: 3px solid #1c1c1c; }
.history svg { width: 24px; height: 18px; }
.back { color: #fff; }
.fwd { color: #777; }
.fwd svg { transform: scaleX(-1); }
.crumb-icon { width: 28px; height: 24px; margin: 0 18px 0 15px; color: #b8b8b8; }
.crumb-sep { width: 14px; height: 20px; margin: 0 10px; }
.zoom { margin-left: auto; color: #383838; font-size: 26px; font-weight: 500; }
.node { position: absolute; width: 247px; padding: 2px 2px 5px; border-radius: 9px; background: rgba(13, 16, 13, .95); box-shadow: inset 0 0 0 1px #080808, 0 3px 6px rgba(0, 0, 0, .6); }
.node header { display: flex; align-items: center; gap: 6px; height: 27px; padding: 0 6px 2px 11px; border-radius: 7px 7px 0 0; border-top: 1px solid #8a4545; background: linear-gradient(90deg, #8f1717, #691212 30%, #7a2525 65%, #3a3a3a); color: #c4b0b0; }
.node header svg { color: #e0cccc; }
.node header i { width: 14px; height: 14px; margin: 0 0 0 auto; border: 3px solid #f03434; border-radius: 3px; background: #200000; }
.node header b { font-weight: 700; }
.exec { display: flex; justify-content: flex-end; align-items: center; height: 38px; padding: 4px 12px 0 0; }
.exec svg { width: 16px; height: 18px; }
.node li { display: flex; justify-content: flex-end; align-items: center; gap: 5px; height: 33px; padding-right: 12px; color: #eaeaea; font-size: 16px; }
.node li svg { width: 20px; height: 14px; }
.stamp { position: absolute; right: 14px; bottom: 18px; color: #484848; font-size: 80px; font-weight: 700; line-height: 80px; }

.details { display: flex; flex-direction: column; flex: none; width: 475px; }
.empty { flex: 1; background: #242424; }

.status { display: flex; gap: 3px; height: 40px; padding: 0 4px 0 1px; }
.cell { display: flex; align-items: center; background: #242424; }
.drawer { width: 177px; padding-left: 17px; }
.drawer .s20 { margin: 0 5px 0 9px; }
.console { width: 452px; padding: 0 7px 0 12px; gap: 5px; }
.console input { flex: 1; min-width: 0; height: 30px; margin-left: 10px; padding: 0 16px 4px; border: 1px solid #484848; border-radius: 5px; background: #0f0f0f; font-size: 15px; }
.fill { flex: 1; }
.source { width: 193px; padding-left: 9px; gap: 6px; }

.taskbar { display: flex; align-items: center; height: 50px; padding: 0 5px 0 20px; background: #1e2122; color: #fff; font: 17px/20px "Open Sans", "Noto Sans CJK SC", sans-serif; }
.sys { width: 60px; }
.apps { display: flex; align-self: stretch; margin-left: -11px; }
.apps button { justify-content: center; width: 51px; margin-right: 11px; border-bottom: 3px solid #76b9ed; }
.apps svg { width: 29px; height: 28px; }
.apps .current { --mark: #fff; width: 61px; margin-left: -5px; background: #505353; color: #000; }
.apps .current svg { width: 30px; height: 30px; }
.weather { display: flex; align-items: center; gap: 12px; margin-left: auto; font-size: 18px; }
.weather svg { width: 28px; height: 24px; }
.tray { display: flex; align-items: center; gap: 11px; margin-left: 20px; }
.tray svg { width: 19px; height: 18px; }
.tray b { font-weight: 500; }
.wang { width: 18px; height: 20px; margin-left: 8px; border-radius: 8px; background: #2f7bf5; font-size: 14px; text-align: center; }
.clock { display: flex; flex-direction: column; align-items: center; width: 75px; margin-left: 74px; padding-bottom: 2px; font-size: 15px; line-height: 19px; white-space: nowrap; }
.notice { position: relative; width: 46px; margin-left: 76px; height: 50px; border-right: 1px solid #777; }
.notice i { position: absolute; left: 10px; top: 25px; width: 20px; height: 20px; border: 1px solid #999; border-radius: 50%; background: #2c2c2c; font: 700 14px/18px "Open Sans", sans-serif; text-align: center; }

.activate { position: absolute; left: 83%; bottom: 99px; display: flex; flex-direction: column; color: #868686; font: 18px/24px "Open Sans", "Noto Sans CJK SC", sans-serif; pointer-events: none; }
.activate strong { font-size: 26px; font-weight: 400; line-height: 32px; }
.orb { position: absolute; right: -17px; top: 17px; display: flex; align-items: center; justify-content: center; width: 74px; height: 74px; border: 6px solid rgba(18, 80, 18, .5); border-radius: 50%; background: radial-gradient(circle, #161c18 30%, #0f7a16 72%) padding-box; }
.orb svg { width: 20px; height: 22px; }
.meter { position: absolute; right: 15px; top: 502px; display: flex; align-items: center; width: 140px; height: 49px; padding: 0 9px 0 41px; border-radius: 25px; background: linear-gradient(#fbfbfb, #ececec); }
.rates { flex: 1; padding-bottom: 3px; color: #111; font: 12px/20px "DejaVu Sans Condensed", "Open Sans", sans-serif; }
.rates p { display: flex; align-items: center; justify-content: space-between; padding-right: 8px; white-space: nowrap; }
.rates svg { width: 10px; height: 10px; }
.meter button { margin-bottom: 3px; }
.meter button svg { width: 20px; height: 20px; }
.dial { position: absolute; left: -45px; top: -21px; width: 84px; height: 88px; }
.dial svg { width: 84px; height: 88px; }
.dial p { position: absolute; left: 0; top: 29px; width: 84px; color: #555; font: 300 28px/30px Roboto, sans-serif; text-align: center; }
.dial small { font-size: 17px; font-weight: 400; }
.ime { position: absolute; right: 243px; top: 861px; display: flex; align-items: center; gap: 9px; height: 34px; padding: 0 8px 0 35px; border: 1px solid #3c6cab; background: #fff; color: #2d74e0; }
.ime button { justify-content: center; width: 20px; height: 20px; font-weight: 700; font-size: 18px; }
.ime button svg { width: 20px; height: 20px; }
.ime .shirt { position: relative; }
.ime .shirt::after { content: ""; position: absolute; right: -4px; top: -5px; width: 9px; height: 9px; border-radius: 50%; background: #f85a30; }
.bubble { position: absolute; left: -8px; top: -3px; width: 34px; height: 36px; border-radius: 14px 14px 17px 12px; background: linear-gradient(160deg, #3f50f5, #2f7bff 60%, #40c8ff); color: #fff; font-size: 24px; line-height: 34px; text-align: center; }
.source-link { position: absolute; right: 11px; bottom: 7px; color: rgba(255, 255, 255, .62); font: 15px/24px "Open Sans", sans-serif; text-decoration: none; text-shadow: 1px 1px 1px rgba(0, 0, 0, .6); }
</style>
